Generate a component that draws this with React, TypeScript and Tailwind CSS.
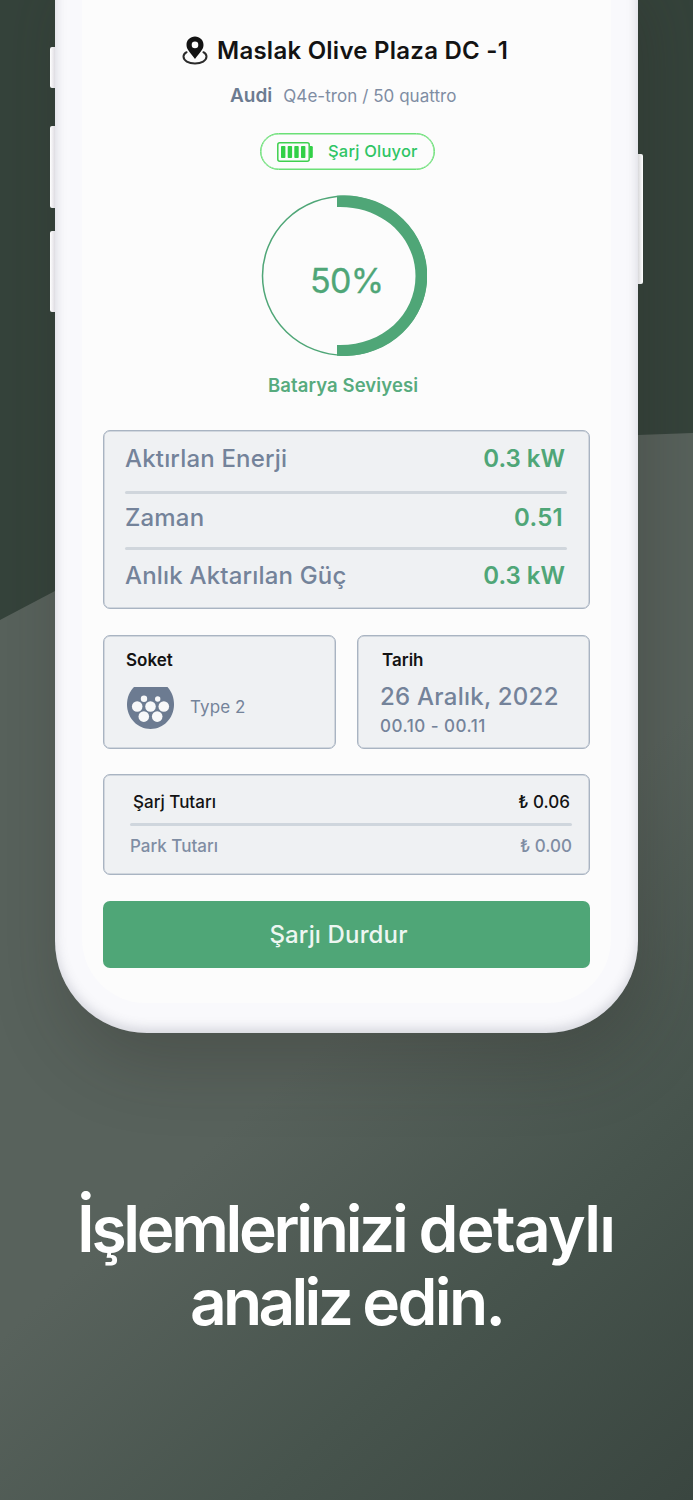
import type { ReactNode } from "react";

const ENERGY_ROWS = [
  { label: "Aktırlan Enerji", value: "0.3 kW", valueClass: "mr-[3px]" },
  { label: "Zaman", value: "0.51", valueClass: "mr-[5px] tracking-[0.3px]" },
  { label: "Anlık Aktarılan Güç", value: "0.3 kW", valueClass: "mr-[3px]" }
];

function Card({ className, children }: { className: string; children: ReactNode }) {
  return (
    <div className={`rounded-[7px] border border-[#a9b4c2] bg-[#eff1f3] shadow-[inset_0_0_0_0.5px_#b4bdc9] ${className}`}>
      {children}
    </div>
  );
}

function Backdrop() {
  return (
    <svg className="absolute inset-0 h-full w-full" viewBox="0 0 693 1500" preserveAspectRatio="none">
      <defs>
        <linearGradient id="hill" gradientUnits="userSpaceOnUse" x1="250" y1="1110" x2="644" y2="1542">
          <stop offset="0" stopColor="#58625c" />
          <stop offset="0.5" stopColor="#47544d" />
          <stop offset="1" stopColor="#3a4640" />
        </linearGradient>
      </defs>
      <rect width="693" height="1500" fill="#35433b" />
      <path d="M0 620 L55 591 C240 495 440 440 638 435 L693 433 V1500 H0 Z" fill="url(#hill)" />
    </svg>
  );
}

function PinIcon() {
  return (
    <svg className="h-[29px] w-[26px]" viewBox="0 0 26 29" fill="none">
      <path
        fillRule="evenodd"
        d="M13 .6c-4.800 0-8.500 3.600-8.500 8.300 0 5.200 5.300 8.900 8.500 14.100 3.200-5.200 8.500-8.900 8.500-14.100C21.500 4.200 17.800.6 13 .6Zm0 5a3.300 3.300 0 1 1 0 6.600 3.300 3.300 0 0 1 0-6.600Z"
        fill="#131313"
      />
      <path
        d="M4.600 16.200C2.500 17.400 1.500 18.800 1.500 20.600c0 4 5 6.900 11.500 6.900s11.500-2.900 11.500-6.900c0-1.800-1-3.200-3.100-4.400"
        stroke="#2b2b2b"
        strokeWidth="2"
        strokeLinecap="round"
      />
    </svg>
  );
}

function BatteryIcon() {
  return (
    <svg className="h-[20px] w-[36px]" viewBox="0 0 36 20" fill="none">
      <rect x="0.800" y="0.800" width="31.400" height="18.400" rx="2" stroke="#3fd04f" strokeWidth="1.500" />
      <path d="M33 4h1.500a1.300 1.300 0 0 1 1.300 1.300v9.400a1.300 1.300 0 0 1-1.300 1.300H33Z" fill="#32d047" />
      {[4, 10.7, 17.3, 24].map((x) => (
        <rect key={x} x={x} y="4" width="4.400" height="12" rx="0.800" fill="#32d047" />
      ))}
    </svg>
  );
}

function SocketIcon() {
  return (
    <svg className="h-[42px] w-[47px]" viewBox="0 0 47 42">
      <path d="M7 0H40.500C44.600 4.500 47 10.500 47 17.500 47 31 36.500 42 23.500 42S0 31 0 17.500C0 10.500 2.500 4.500 7 0Z" fill="#6c7b91" />
      <g fill="#f7f8f9">
        <circle cx="17" cy="11.700" r="3.200" />
        <circle cx="30.700" cy="12" r="2.700" />
        <circle cx="10.200" cy="19.500" r="5.300" />
        <circle cx="23.500" cy="19.500" r="5.300" />
        <circle cx="36.800" cy="19.500" r="5.300" />
        <circle cx="16.800" cy="29.600" r="5.300" />
        <circle cx="30.200" cy="29.600" r="5.300" />
      </g>
    </svg>
  );
}

function BatteryLevel() {
  return (
    <div className="relative mt-[25px] ml-[158px] h-[162px] w-[166px]">
      <svg className="absolute inset-0" width="166" height="162" viewBox="0 0 166 162">
        <ellipse cx="83.500" cy="80.700" rx="82" ry="79.500" fill="none" stroke="#4fa677" strokeWidth="1.500" />
        <path
          d="M76 .7C122 -2.500 166 32 166 81S122 164 76 160.800V150C120 151.500 154.500 121 154.500 81S120 10.500 76 12Z"
          fill="#4fa677"
        />
      </svg>
      <div className="relative pt-[65px] pl-[49px] text-[34px] leading-[42px] tracking-[-0.7px] text-[#4fa677] [-webkit-text-stroke:0.3px_#4fa677]">
        50%
      </div>
    </div>
  );
}

export default function App() {
  return (
    <div className="relative h-[1500px] w-[693px] overflow-hidden font-['Inter',sans-serif]">
      <Backdrop />

      {/* the phone starts above the page so its top edge is cut off */}
      <div className="relative -mt-10 ml-[55px] h-[1073px] w-[583px] rounded-b-[92px] bg-[#f9f9fc] px-[27px] pb-[30px] shadow-[10px_30px_70px_rgba(40,35,30,0.25),inset_0_-4px_12px_rgba(90,95,115,0.24)]">
        {/* side buttons */}
        <div className="absolute top-[87px] -left-[5px] h-[41px] w-[5px] rounded-l-[2px] bg-linear-to-r from-white to-[#dedce2]" />
        <div className="absolute top-[166px] -left-[5px] h-[82px] w-[5px] rounded-l-[2px] bg-linear-to-r from-white to-[#dedce2]" />
        <div className="absolute top-[271px] -left-[5px] h-[81px] w-[5px] rounded-l-[2px] bg-linear-to-r from-white to-[#dedce2]" />
        <div className="absolute top-[194px] -right-[5px] h-[130px] w-[5px] rounded-r-[2px] bg-linear-to-l from-white to-[#d8d8da]" />

        <div className="h-full rounded-b-[64px] bg-[#fcfcfc] px-[21px] pt-[75px]">
          <div className="flex h-[31px] items-center pl-[79px]">
            <PinIcon />
            <h1 className="ml-[9px] text-[24px] font-semibold tracking-[0.25px] whitespace-nowrap text-[#131313]">
              Maslak Olive Plaza DC -1
            </h1>
          </div>

          <div className="mt-[18px] flex h-6 items-center pl-[127px] whitespace-nowrap">
            <span className="text-[19px] font-semibold text-[#6c7b91]">Audi</span>
            <span className="mt-0.5 ml-[11px] text-[17px] tracking-[0.05px] text-[#7f8da3]">Q4e-tron / 50 quattro</span>
          </div>

          <div className="mt-[25px] ml-[157px] flex h-[37px] w-[175px] items-center rounded-full border border-[#6be077] pl-4 shadow-[inset_0_0_0_0.5px_#6be077]">
            <BatteryIcon />
            <span className="ml-[15px] text-[16.5px] font-medium tracking-[0.2px] whitespace-nowrap text-[#2fc565]">
              Şarj Oluyor
            </span>
          </div>

          <BatteryLevel />
          <div className="mt-[16px] pl-[165px] text-[18.5px] leading-6 font-semibold tracking-[0.1px] text-[#57ab7e]">
            Batarya Seviyesi
          </div>

          <Card className="mt-[33px] h-[179px] px-[21px] pt-2">
            {ENERGY_ROWS.map((row, i) => (
              <div key={row.label}>
                {i > 0 && <div className={`h-[3px] w-[442px] rounded-full bg-[#d0d6dc] ${i === 1 ? "mt-3" : "mt-[9.5px]"}`} />}
                <div className={`flex h-10 items-center justify-between text-[24px] font-medium whitespace-nowrap ${i === 0 ? "" : i === 1 ? "mt-[3.5px]" : "mt-[5.5px]"}`}>
                  <span className="tracking-[0.18px] text-[#74839a]">{row.label}</span>
                  <span className={`font-semibold text-[#4fa677] ${row.valueClass}`}>{row.value}</span>
                </div>
              </div>
            ))}
          </Card>

          <div className="mt-[26px] flex gap-[21px]">
            <Card className="h-[114px] w-[233px] px-[22px] pt-3">
              <div className="text-[17px] leading-6 font-semibold text-[#131313]">Soket</div>
              <div className="mt-[15px] ml-px flex items-center gap-4">
                <SocketIcon />
                <span className="text-[17px] tracking-[0.1px] text-[#74839a]">Type 2</span>
              </div>
            </Card>
            <Card className="h-[114px] w-[233px] px-[22px] pt-3">
              <div className="pl-0.5 text-[17px] leading-6 font-semibold text-[#131313]">Tarih</div>
              <div className="mt-[10px] text-[24px] leading-[30px] font-medium tracking-[0.25px] whitespace-nowrap text-[#74839a]">
                26 Aralık, 2022
              </div>
              <div className="mt-[2px] text-[17px] leading-6 font-medium tracking-[0.5px] text-[#74839a]">00.10 - 00.11</div>
            </Card>
          </div>

          <Card className="mt-[25px] h-[101px] px-[26px] pt-4">
            <div className="flex h-6 w-[440px] items-center justify-between text-[17px] font-medium text-[#131313]">
              <span className="pl-[3px]">Şarj Tutarı</span>
              <span>₺ 0.06</span>
            </div>
            <div className="mt-2 h-[3px] w-[442px] rounded-full bg-[#cfd6dd]" />
            <div className="mt-[9px] flex h-6 w-[442px] items-center justify-between text-[17px] font-medium text-[#7f8da3]">
              <span>Park Tutarı</span>
              <span>₺ 0.00</span>
            </div>
          </Card>

          <button className="mt-[26px] h-[67px] w-full rounded-[7px] bg-[#4fa677] pr-4 text-[24px] font-medium tracking-[0.15px] text-[#edf6f1]">
            Şarjı Durdur
          </button>
        </div>
      </div>

      <h2 className="relative mt-[159px] text-[64px] leading-[73px] font-semibold whitespace-nowrap text-white">
        <span className="flex gap-[13px] pl-[77px]">
          <span className="tracking-[-3.3px]">İşlemlerinizi</span>
          <span className="tracking-[-1.7px]">detaylı</span>
        </span>
        <span className="flex gap-[12px] pl-[190px]">
          <span className="tracking-[-3.7px]">analiz</span>
          <span className="tracking-[-2.6px]">edin.</span>
        </span>
      </h2>
    </div>
  );
}
